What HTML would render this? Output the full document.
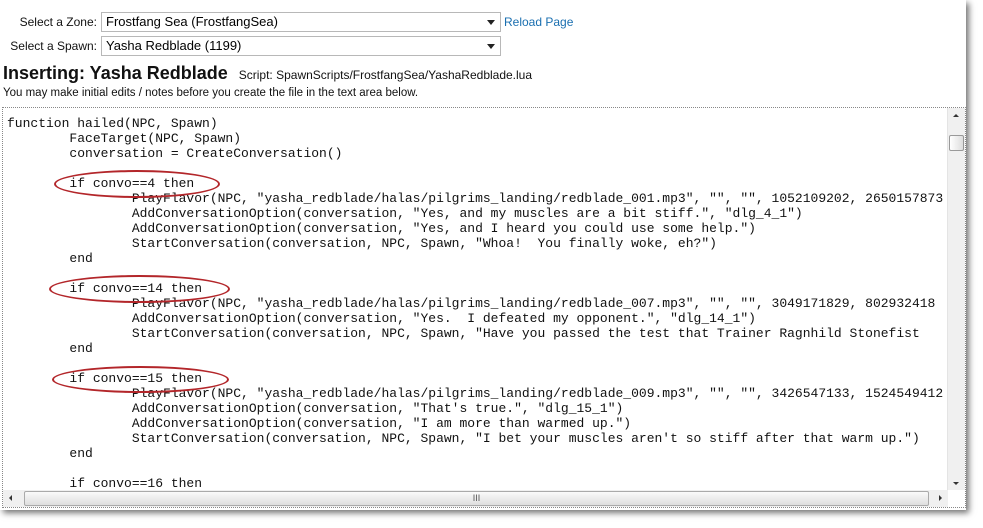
<!DOCTYPE html>
<html><head><style>
body{margin:0;width:983px;height:528px;background:#fff;position:relative;overflow:hidden;font-family:"Liberation Sans",Arial,sans-serif;}
.page{position:absolute;left:0;top:0;width:966px;height:510px;background:#fff;box-shadow:3px 3px 6px rgba(0,0,0,.55);}
.lbl{position:absolute;font-size:12px;color:#111;text-align:right;width:97px;left:0}
.sel{position:absolute;left:101px;width:394px;height:18px;border:1px solid #b8b8b8;background:#fff;font-size:13px;line-height:18px;padding-left:4px;box-sizing:content-box}
.sel:after{content:"";position:absolute;right:5px;top:7px;border-left:4px solid transparent;border-right:4px solid transparent;border-top:5px solid #222}
.ta{position:absolute;left:2px;top:107px;width:962px;height:399px;border:1px dotted #888;overflow:hidden}
pre{margin:0;position:absolute;left:4px;top:8px;font-family:"Liberation Mono","Courier New",monospace;font-size:13px;line-height:15px;color:#111}
.ell{position:absolute;border:2px solid #b3262a;border-radius:50%;}
.vs{position:absolute;right:0;top:0;width:17px;height:382px;background:#f0f0f0;border-left:1px solid #e4e4e4}
.hs{position:absolute;left:0;bottom:0;width:945px;height:17px;background:#f0f0f0}
</style></head><body>
<div class="page">
<div class="lbl" style="top:15px">Select a Zone:</div>
<div class="sel" style="top:12px">Frostfang Sea (FrostfangSea)</div>
<div style="position:absolute;left:504px;top:15px;font-size:12px;color:#1a6fb0">Reload Page</div>
<div class="lbl" style="top:39px">Select a Spawn:</div>
<div class="sel" style="top:36px">Yasha Redblade (1199)</div>
<div style="position:absolute;left:3px;top:63px;font-size:18px;font-weight:bold;color:#111">Inserting: Yasha Redblade <span style="font-size:12px;font-weight:normal;margin-left:6px">Script: SpawnScripts/FrostfangSea/YashaRedblade.lua</span></div>
<div style="position:absolute;left:3px;top:87px;font-size:11.5px;color:#111">You may make initial edits / notes before you create the file in the text area below.</div>
<div class="ta">
<pre>function hailed(NPC, Spawn)
        FaceTarget(NPC, Spawn)
        conversation = CreateConversation()

        if convo==4 then
                PlayFlavor(NPC, "yasha_redblade/halas/pilgrims_landing/redblade_001.mp3", "", "", 1052109202, 2650157873
                AddConversationOption(conversation, "Yes, and my muscles are a bit stiff.", "dlg_4_1")
                AddConversationOption(conversation, "Yes, and I heard you could use some help.")
                StartConversation(conversation, NPC, Spawn, "Whoa!  You finally woke, eh?")
        end

        if convo==14 then
                PlayFlavor(NPC, "yasha_redblade/halas/pilgrims_landing/redblade_007.mp3", "", "", 3049171829, 802932418
                AddConversationOption(conversation, "Yes.  I defeated my opponent.", "dlg_14_1")
                StartConversation(conversation, NPC, Spawn, "Have you passed the test that Trainer Ragnhild Stonefist
        end

        if convo==15 then
                PlayFlavor(NPC, "yasha_redblade/halas/pilgrims_landing/redblade_009.mp3", "", "", 3426547133, 1524549412
                AddConversationOption(conversation, "That's true.", "dlg_15_1")
                AddConversationOption(conversation, "I am more than warmed up.")
                StartConversation(conversation, NPC, Spawn, "I bet your muscles aren't so stiff after that warm up.")
        end

        if convo==16 then</pre>
<div class="vs"><div style="position:absolute;left:5px;top:6px;border-left:3px solid transparent;border-right:3px solid transparent;border-bottom:3px solid #333"></div><div style="position:absolute;left:1px;top:27px;width:13px;height:14px;border:1px solid #999;background:linear-gradient(90deg,#fff,#ddd);border-radius:2px"></div><div style="position:absolute;left:5px;bottom:5px;border-left:3px solid transparent;border-right:3px solid transparent;border-top:3px solid #333"></div></div>
<div class="hs"><div style="position:absolute;left:6px;top:5px;border-top:3px solid transparent;border-bottom:3px solid transparent;border-right:3px solid #333"></div><div style="position:absolute;left:21px;top:1px;width:903px;height:13px;border:1px solid #aaa;background:linear-gradient(#fafafa,#dedede);border-radius:2px;text-align:center;font-size:9px;line-height:13px;color:#555">III</div><div style="position:absolute;left:936px;top:5px;border-top:3px solid transparent;border-bottom:3px solid transparent;border-left:3px solid #333"></div></div>
</div>
<div class="ell" style="left:54px;top:170px;width:162px;height:24px"></div>
<div class="ell" style="left:49px;top:275px;width:177px;height:24px"></div>
<div class="ell" style="left:52px;top:366px;width:173px;height:23px"></div>
</div>
</body></html>
